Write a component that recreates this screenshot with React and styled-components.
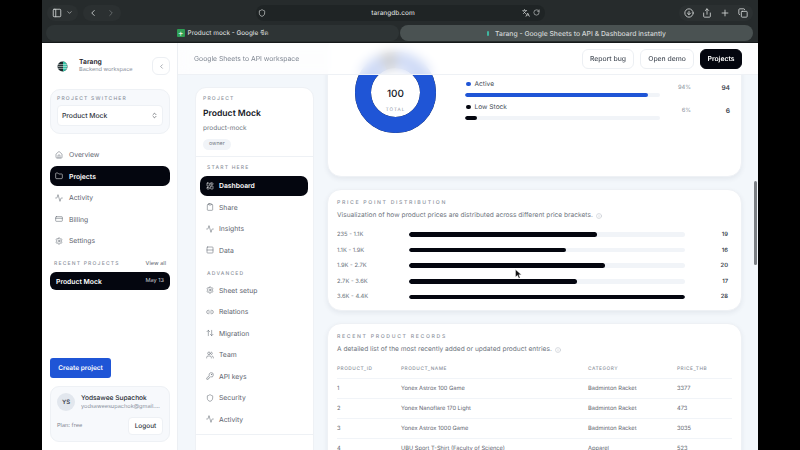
import styled, { createGlobalStyle } from "styled-components";
import {
  Activity,
  ArrowUpDown,
  ChevronDown,
  ChevronLeft,
  ChevronRight,
  ChevronsUpDown,
  CircleArrowDown,
  Clipboard,
  Copy,
  CreditCard,
  Folder,
  Home,
  Info,
  KeyRound,
  Languages,
  LayoutDashboard,
  Link2,
  PanelLeft,
  Plus,
  RotateCw,
  Rows2,
  Settings,
  Share,
  Shield,
  Users,
} from "lucide-react";

const GlobalStyle = createGlobalStyle`
  html, body {
    margin: 0;
    height: 100%;
    background: #000;
    overflow: hidden;
  }
  * { box-sizing: border-box; }
  body {
    font-family: Inter, "Liberation Sans", sans-serif;
    color: #1b2028;
    text-rendering: geometricPrecision;
  }
`;

const Frame = styled.div`
  width: 716px;
  height: 450px;
  margin-left: 42px;
  display: flex;
  flex-direction: column;
  position: relative;
  overflow: hidden;
  background: #fff;
`;

/* browser chrome */
const Chrome = styled.div`
  height: 43px;
  flex: none;
  background: #262b2c;
  display: flex;
  flex-direction: column;
  color: #d5d8d8;
  border-bottom: 1px solid #15191a;
`;
const ToolRow = styled.div`
  height: 25px;
  display: flex;
  align-items: center;
  padding: 0 0 0 5px;
`;
const ToolGroup = styled.div`
  display: flex;
  flex: none;
  align-items: center;
  gap: ${(p) => p.$gap || 6}px;
  height: 16px;
  margin-right: ${(p) => p.$mr || 0}px;
  margin-left: ${(p) => p.$ml || 0}px;
  padding: 0 5px;
  border-radius: 8px;
  background: #2b3031;
`;
const UrlBar = styled.div`
  width: 289px;
  flex: none;
  height: 16px;
  border-radius: 8px;
  background: #1f2425;
  display: flex;
  align-items: center;
  gap: 3px;
  padding: 0 5px 0 2px;
  font-size: 6.5px;
  font-weight: 500;
  color: #d8dbdb;
`;
const UrlText = styled.span`
  flex: 1;
  text-align: center;
  padding-right: 2px;
`;
const TabRow = styled.div`
  height: 17px;
  display: grid;
  grid-template-columns: repeat(2, minmax(0, 1fr));
  gap: 1px;
  padding: 0 5px 0 4px;
`;
const Tab = styled.div`
  height: 16px;
  border-radius: 8px;
  background: ${(p) => (p.$active ? "#4a5252" : "#2e3435")};
  display: flex;
  align-items: center;
  justify-content: center;
  gap: 3px;
  font-size: ${(p) => (p.$active ? 6.8 : 6.4)}px;
  font-weight: 500;
  color: #d3d6d6;
`;
const SheetIcon = styled.span`
  width: 8px;
  height: 8px;
  border-radius: 1px;
  background: #2f9e55;
  color: #e6f5ea;
  font-size: 8px;
  line-height: 8px;
  text-align: center;
`;
const TabDot = styled.span`
  width: 2px;
  height: 5px;
  border-radius: 1px;
  background: #3fb6a0;
  margin-right: 3px;
`;

/* app */
const Body = styled.div`
  flex: 1;
  min-height: 0;
  display: flex;
`;
const Sidebar = styled.aside`
  width: 136px;
  flex: none;
  background: #fff;
  border-right: 1px solid #eceff3;
  padding: 0 7px 8px 8px;
  display: flex;
  flex-direction: column;
`;
const Brand = styled.div`
  height: 46px;
  display: flex;
  align-items: center;
  padding-left: 7px;
`;
const BrandText = styled.div`
  margin-left: 11px;
  flex: 1;
`;
const BrandName = styled.div`
  font-size: 6.8px;
  font-weight: 600;
  line-height: 9px;
`;
const BrandSub = styled.div`
  font-size: 5.6px;
  color: #8a919c;
  line-height: 9px;
`;
const Collapse = styled.div`
  width: 18px;
  height: 18px;
  border-radius: 6px;
  border: 1px solid #eceff3;
  display: flex;
  align-items: center;
  justify-content: center;
  color: #6f7680;
`;
const Switcher = styled.div`
  height: 45px;
  border: 1px solid #eef1f5;
  border-radius: 10px;
  background: #f7f9fc;
  padding: 6px 6px 0;
  margin-bottom: 10.75px;
`;
const Eyebrow = styled.div`
  font-size: 5px;
  font-weight: 500;
  letter-spacing: 1.2px;
  color: #8c929c;
  text-transform: uppercase;
`;
const Select = styled.div`
  height: 21px;
  margin-top: 3px;
  background: #fff;
  border: 1px solid #eef1f5;
  border-radius: 4px;
  padding: 0 4px;
  display: flex;
  align-items: center;
  justify-content: space-between;
  font-size: 6.8px;
  font-weight: 500;
  color: #30353d;
`;
const NavItem = styled.div`
  height: 20px;
  margin-bottom: 1.5px;
  display: flex;
  align-items: center;
  gap: 6px;
  padding-left: 5px;
  border-radius: 7px;
  font-size: 6.8px;
  font-weight: ${(p) => (p.$active ? 600 : 400)};
  background: ${(p) => (p.$active ? "#04060f" : "transparent")};
  color: ${(p) => (p.$active ? "#fff" : "#5d646e")};
  svg {
    width: 8px;
    height: 8px;
    stroke-width: 1.6;
    flex: none;
  }
`;
const RecentHead = styled.div`
  display: flex;
  justify-content: space-between;
  align-items: center;
  margin-top: 9px;
  padding: 0 4px;
  color: #8c929c;
`;
const ViewAll = styled.span`
  font-size: 5.6px;
  color: #5d646e;
`;
const RecentItem = styled.div`
  height: 18px;
  margin-top: 5px;
  background: #04060f;
  border-radius: 6px;
  color: #fff;
  padding: 0 6px;
  display: flex;
  align-items: center;
  justify-content: space-between;
  font-size: 6.8px;
  font-weight: 600;
`;
const RecentDate = styled.span`
  font-size: 5.6px;
  font-weight: 400;
  color: #c9ccd2;
`;
const CreateBtn = styled.div`
  margin-top: auto;
  width: 61px;
  height: 20px;
  border-radius: 3px;
  background: #1f55d6;
  color: #fff;
  font-size: 6.5px;
  font-weight: 600;
  display: flex;
  align-items: center;
  justify-content: center;
`;
const UserCard = styled.div`
  margin-top: 8px;
  height: 56px;
  border: 1px solid #eef1f5;
  border-radius: 9px;
  background: #f7f9fc;
  padding: 6px;
  display: grid;
  grid-template-columns: 18px 1fr;
  column-gap: 6px;
  align-content: space-between;
`;
const Avatar = styled.div`
  width: 18px;
  height: 18px;
  border-radius: 50%;
  background: #e2e7ee;
  font-size: 6px;
  font-weight: 600;
  color: #3b424c;
  display: flex;
  align-items: center;
  justify-content: center;
`;
const UserText = styled.div`
  padding-top: 1px;
`;
const UserName = styled.div`
  font-size: 6.6px;
  font-weight: 500;
  line-height: 9px;
  color: #252a31;
`;
const UserMail = styled.div`
  font-size: 5.6px;
  color: #8a919c;
  line-height: 8px;
  white-space: nowrap;
  overflow: hidden;
  text-overflow: ellipsis;
  max-width: 81px;
`;
const UserFoot = styled.div`
  grid-column: 1 / -1;
  display: flex;
  justify-content: space-between;
  align-items: center;
  font-size: 5.6px;
  color: #7f8691;
`;
const LogoutBtn = styled.div`
  width: 35px;
  height: 18px;
  border: 1px solid #eef1f5;
  border-radius: 4px;
  background: #fff;
  color: #30353d;
  font-size: 6.5px;
  font-weight: 500;
  display: flex;
  align-items: center;
  justify-content: center;
`;

const Main = styled.main`
  flex: 1;
  min-width: 0;
  position: relative;
  overflow: hidden;
  background: #f3f7fb;
`;
const Header = styled.header`
  position: absolute;
  inset: 0 0 auto 0;
  height: 32px;
  z-index: 2;
  display: flex;
  align-items: center;
  justify-content: space-between;
  padding: 0 16px;
  background: rgba(255, 255, 255, 0.78);
  backdrop-filter: blur(6px);
  border-bottom: 1px solid #eef1f5;
  font-size: 6.8px;
  color: #7f8691;
`;
const HeaderActions = styled.div`
  display: flex;
  gap: 6px;
`;
const HeaderBtn = styled.div`
  width: ${(p) => p.$w}px;
  height: 20px;
  border-radius: 6px;
  border: 1px solid ${(p) => (p.$dark ? "#04060f" : "#eceff3")};
  background: ${(p) => (p.$dark ? "#04060f" : "#fff")};
  color: ${(p) => (p.$dark ? "#fff" : "#4b525c")};
  font-size: 6.8px;
  font-weight: ${(p) => (p.$dark ? 600 : 500)};
  display: flex;
  align-items: center;
  justify-content: center;
`;
const Content = styled.div`
  display: flex;
  gap: 13px;
  padding-left: 17px;
`;
const ProjectPanel = styled.section`
  width: 119px;
  flex: none;
  margin-top: 44px;
  background: #fff;
  border: 1px solid #eef1f5;
  border-radius: 11px 11px 0 0;
  height: 380px;
`;
const PanelHead = styled.div`
  height: 69px;
  padding: 8px 7px 0;
  border-bottom: 1px solid #eef1f5;
`;
const ProjectTitle = styled.div`
  font-size: 8.6px;
  font-weight: 600;
  color: #14181f;
  margin-top: 7px;
  line-height: 11px;
`;
const ProjectSlug = styled.div`
  font-size: 6.5px;
  color: #6f7680;
  margin-top: 4px;
  line-height: 9px;
`;
const Badge = styled.div`
  width: fit-content;
  margin-top: 6px;
  padding: 0 6px;
  height: 11px;
  line-height: 11px;
  border-radius: 6px;
  background: #f1f4f8;
  font-size: 5.3px;
  color: #6f7680;
`;
const PanelNav = styled.div`
  padding: 8px 5px 0 4px;
`;
const GroupLabel = styled.div`
  font-size: 5px;
  font-weight: 500;
  letter-spacing: 1.2px;
  color: #8c929c;
  padding-left: 7px;
  height: ${(p) => (p.$advanced ? 9 : 10.75)}px;
  margin-top: ${(p) => (p.$advanced ? 11 : 0)}px;
  text-transform: uppercase;
`;
const PanelItem = styled(NavItem)`
  padding-left: 6px;
  gap: 5px;
`;
const PanelRule = styled.div`
  border-top: 1px solid #eef1f5;
  margin-top: 5px;
`;
const Column = styled.div`
  width: 415px;
  flex: none;
  display: flex;
  flex-direction: column;
  gap: 12px;
`;
const Card = styled.section`
  background: #fff;
  border: 1px solid #eef1f5;
  border-radius: 14px;
  box-shadow: 0 2px 5px rgba(30, 45, 70, 0.07);
`;
const StatusCard = styled(Card)`
  margin-top: -8px;
  height: 142px;
  padding: 16px 12px 0 27px;
  display: flex;
  gap: 29px;
`;
const Donut = styled.div`
  width: 81px;
  height: 81px;
  flex: none;
  position: relative;
`;
const DonutLabel = styled.div`
  position: absolute;
  inset: 0;
  padding-top: 36px;
  display: flex;
  flex-direction: column;
  align-items: center;
`;
const DonutValue = styled.div`
  font-size: 10px;
  line-height: 12px;
  font-weight: 500;
  color: #14181f;
`;
const DonutCaption = styled.div`
  font-size: 4.6px;
  line-height: 6px;
  letter-spacing: 1px;
  color: #8c929c;
  margin-top: 8px;
`;
const Legend = styled.div`
  flex: 1;
  padding-top: 27.5px;
  display: grid;
  grid-template-columns: 195px 31px 39px;
  grid-auto-rows: 18px;
  row-gap: 5px;
  align-content: start;
  align-items: start;
`;
const LegendName = styled.div`
  display: flex;
  align-items: center;
  gap: 4px;
  font-size: 6.6px;
  color: #474e58;
  height: 9px;
`;
const LegendDot = styled.span`
  width: 4.5px;
  height: 4.5px;
  border-radius: 50%;
  margin-left: 1px;
  background: ${(p) => p.$color};
`;
const LegendBar = styled.div`
  height: 4px;
  margin-top: 4px;
  border-radius: 2px;
  background: #f1f4f8;
  overflow: hidden;
`;
const Fill = styled.div`
  height: 100%;
  border-radius: 3px;
  background: ${(p) => p.$color};
`;
const Pct = styled.div`
  font-size: 5.8px;
  line-height: 8px;
  padding-top: 4px;
  color: #8a919c;
  text-align: right;
`;
const Num = styled.div`
  font-size: 6.6px;
  line-height: 8px;
  padding-top: 4px;
  font-weight: 600;
  color: #3b424c;
  text-align: right;
`;
const SectionCard = styled(Card)`
  padding: 9px 9px 0;
  height: ${(p) => p.$h}px;
`;
const SectionLabel = styled.div`
  font-size: 5.2px;
  font-weight: 500;
  letter-spacing: 1.65px;
  color: #8c929c;
  line-height: 8px;
`;
const SectionNote = styled.div`
  margin-top: 4px;
  font-size: 6.6px;
  line-height: 9px;
  color: #6f7680;
  display: flex;
  align-items: center;
  gap: 3px;
  svg {
    width: 6px;
    height: 6px;
    color: #b9bec6;
  }
`;
const PriceRows = styled.div`
  margin-top: 11px;
  display: grid;
  row-gap: 9.6px;
`;
const PriceRow = styled.div`
  display: grid;
  grid-template-columns: 72px 276px 1fr;
  align-items: center;
  height: 6px;
  font-size: 5.8px;
  color: #6a717b;
`;
const PriceBar = styled.div`
  height: 4.5px;
  border-radius: 3px;
  background: #f1f4f8;
  overflow: hidden;
`;
const PriceCount = styled.div`
  text-align: right;
  font-weight: 600;
  color: #3b424c;
  padding-right: 4px;
`;
const TableEl = styled.table`
  width: 100%;
  margin-top: 7px;
  border-collapse: collapse;
  table-layout: fixed;
`;
const Th = styled.th`
  width: ${(p) => p.$w}px;
  text-align: left;
  font-size: 4.8px;
  font-weight: 500;
  letter-spacing: 0.5px;
  color: #8c929c;
  height: 17px;
  padding: 0;
  border-bottom: 1px solid #f1f4f8;
`;
const Td = styled.td`
  font-size: 5.7px;
  color: #5d646e;
  height: 20px;
  padding: 0;
  border-bottom: 1px solid #f1f4f8;
`;
const Scrollbar = styled.div`
  position: absolute;
  right: 1.5px;
  top: 138px;
  width: 3px;
  height: 84px;
  border-radius: 2px;
  background: #7b7f84;
`;
const Cursor = styled.svg`
  position: absolute;
  left: 473px;
  top: 269px;
  width: 7px;
  height: 10px;
  z-index: 3;
`;

const sideNav = [
  ["Overview", Home],
  ["Projects", Folder, true],
  ["Activity", Activity],
  ["Billing", CreditCard],
  ["Settings", Settings],
];
const startNav = [
  ["Dashboard", LayoutDashboard, true],
  ["Share", Clipboard],
  ["Insights", Activity],
  ["Data", Rows2],
];
const advancedNav = [
  ["Sheet setup", Settings],
  ["Relations", Link2],
  ["Migration", ArrowUpDown],
  ["Team", Users],
  ["API keys", KeyRound],
  ["Security", Shield],
  ["Activity", Activity],
];
const prices = [
  ["235 - 1.1K", 19, 68],
  ["1.1K - 1.9K", 16, 57],
  ["1.9K - 2.7K", 20, 71],
  ["2.7K - 3.6K", 17, 61],
  ["3.6K - 4.4K", 28, 100],
];
const records = [
  [1, "Yonex Astrox 100 Game", "Badminton Racket", 3377],
  [2, "Yonex Nanoflare 170 Light", "Badminton Racket", 473],
  [3, "Yonex Astrox 1000 Game", "Badminton Racket", 3035],
  [4, "UBU Sport T-Shirt (Faculty of Science)", "Apparel", 523],
];

function Logo() {
  return (
    <svg width="11" height="11" viewBox="0 0 11 11">
      <circle cx="5.5" cy="5.5" r="5" fill="#1c2a2c" />
      <path d="M6 .6a5 5 0 0 1 0 9.8z" fill="#35c3a6" />
      <path d="M.5 3.6h10M.5 5.5h10M.5 7.4h10" stroke="#fff" strokeWidth=".5" />
    </svg>
  );
}

function StatusDonut() {
  const r = 32.5;
  const c = 2 * Math.PI * r;
  return (
    <Donut>
      <svg width="81" height="81" viewBox="0 0 81 81">
        <circle cx="40.5" cy="40.5" r={r} fill="none" stroke="#111" strokeWidth="16" />
        <circle
          cx="40.5"
          cy="40.5"
          r={r}
          fill="none"
          stroke="#1f55d6"
          strokeWidth="16"
          strokeDasharray={`${c * 0.94} ${c}`}
          transform="rotate(-90 40.5 40.5)"
        />
      </svg>
      <DonutLabel>
        <DonutValue>100</DonutValue>
        <DonutCaption>TOTAL</DonutCaption>
      </DonutLabel>
    </Donut>
  );
}

export default function App() {
  return (
    <>
      <GlobalStyle />
      <Frame>
        <Chrome>
          <ToolRow>
            <ToolGroup $mr={5} $gap={4}>
              <PanelLeft size={10} />
              <ChevronDown size={7} />
            </ToolGroup>
            <ToolGroup $gap={8} $mr={135}>
              <ChevronLeft size={10} />
              <ChevronRight size={10} color="#6d7273" />
            </ToolGroup>
            <UrlBar>
              <Shield size={8} />
              <UrlText>tarangdb.com</UrlText>
              <Languages size={8} />
              <RotateCw size={7} />
            </UrlBar>
            <ToolGroup $ml={134} $gap={8}>
              <CircleArrowDown size={10} />
              <Share size={10} />
              <Plus size={10} />
              <Copy size={10} />
            </ToolGroup>
          </ToolRow>
          <TabRow>
            <Tab>
              <SheetIcon>+</SheetIcon>
              Product mock - Google ชีต
            </Tab>
            <Tab $active>
              <TabDot />
              Tarang - Google Sheets to API &amp; Dashboard instantly
            </Tab>
          </TabRow>
        </Chrome>
        <Body>
          <Sidebar>
            <Brand>
              <Logo />
              <BrandText>
                <BrandName>Tarang</BrandName>
                <BrandSub>Backend workspace</BrandSub>
              </BrandText>
              <Collapse>
                <ChevronLeft size={7} />
              </Collapse>
            </Brand>
            <Switcher>
              <Eyebrow>Project switcher</Eyebrow>
              <Select>
                Product Mock
                <ChevronsUpDown size={7} />
              </Select>
            </Switcher>
            {sideNav.map(([label, Icon, active]) => (
              <NavItem key={label} $active={active}>
                <Icon />
                {label}
              </NavItem>
            ))}
            <RecentHead>
              <Eyebrow>Recent projects</Eyebrow>
              <ViewAll>View all</ViewAll>
            </RecentHead>
            <RecentItem>
              Product Mock
              <RecentDate>May 13</RecentDate>
            </RecentItem>
            <CreateBtn>Create project</CreateBtn>
            <UserCard>
              <Avatar>YS</Avatar>
              <UserText>
                <UserName>Yodsawee Supachok</UserName>
                <UserMail>yodsaweesupachok@gmail.com</UserMail>
              </UserText>
              <UserFoot>
                Plan: free
                <LogoutBtn>Logout</LogoutBtn>
              </UserFoot>
            </UserCard>
          </Sidebar>
          <Main>
            <Header>
              Google Sheets to API workspace
              <HeaderActions>
                <HeaderBtn $w={52}>Report bug</HeaderBtn>
                <HeaderBtn $w={54}>Open demo</HeaderBtn>
                <HeaderBtn $w={42} $dark>
                  Projects
                </HeaderBtn>
              </HeaderActions>
            </Header>
            <Content>
              <ProjectPanel>
                <PanelHead>
                  <Eyebrow>Project</Eyebrow>
                  <ProjectTitle>Product Mock</ProjectTitle>
                  <ProjectSlug>product-mock</ProjectSlug>
                  <Badge>owner</Badge>
                </PanelHead>
                <PanelNav>
                  <GroupLabel>Start here</GroupLabel>
                  {startNav.map(([label, Icon, active]) => (
                    <PanelItem key={label} $active={active}>
                      <Icon />
                      {label}
                    </PanelItem>
                  ))}
                  <GroupLabel $advanced>Advanced</GroupLabel>
                  {advancedNav.map(([label, Icon]) => (
                    <PanelItem key={label}>
                      <Icon />
                      {label}
                    </PanelItem>
                  ))}
                </PanelNav>
                <PanelRule />
              </ProjectPanel>
              <Column>
                <StatusCard>
                  <StatusDonut />
                  <Legend>
                    <div>
                      <LegendName>
                        <LegendDot $color="#1f55d6" />
                        Active
                      </LegendName>
                      <LegendBar>
                        <Fill $color="#1f55d6" style={{ width: "94%" }} />
                      </LegendBar>
                    </div>
                    <Pct>94%</Pct>
                    <Num>94</Num>
                    <div>
                      <LegendName>
                        <LegendDot $color="#04060f" />
                        Low Stock
                      </LegendName>
                      <LegendBar>
                        <Fill $color="#04060f" style={{ width: "6%" }} />
                      </LegendBar>
                    </div>
                    <Pct>6%</Pct>
                    <Num>6</Num>
                  </Legend>
                </StatusCard>
                <SectionCard $h={122}>
                  <SectionLabel>PRICE POINT DISTRIBUTION</SectionLabel>
                  <SectionNote>
                    Visualization of how product prices are distributed across different price brackets.
                    <Info />
                  </SectionNote>
                  <PriceRows>
                    {prices.map(([label, count, pct]) => (
                      <PriceRow key={label}>
                        {label}
                        <PriceBar>
                          <Fill $color="#04060f" style={{ width: `${pct}%` }} />
                        </PriceBar>
                        <PriceCount>{count}</PriceCount>
                      </PriceRow>
                    ))}
                  </PriceRows>
                </SectionCard>
                <SectionCard $h={150}>
                  <SectionLabel>RECENT PRODUCT RECORDS</SectionLabel>
                  <SectionNote>
                    A detailed list of the most recently added or updated product entries.
                    <Info />
                  </SectionNote>
                  <TableEl>
                    <thead>
                      <tr>
                        <Th $w={64}>PRODUCT_ID</Th>
                        <Th $w={187}>PRODUCT_NAME</Th>
                        <Th $w={89}>CATEGORY</Th>
                        <Th>PRICE_THB</Th>
                      </tr>
                    </thead>
                    <tbody>
                      {records.map(([id, name, category, price]) => (
                        <tr key={id}>
                          <Td>{id}</Td>
                          <Td>{name}</Td>
                          <Td>{category}</Td>
                          <Td>{price}</Td>
                        </tr>
                      ))}
                    </tbody>
                  </TableEl>
                </SectionCard>
              </Column>
            </Content>
            <Scrollbar />
          </Main>
        </Body>
        <Cursor viewBox="0 0 7 10">
          <path d="M.5.5v7.6l2-1.8 1.3 3 1.3-.6-1.3-2.9h2.6z" fill="#111" stroke="#fff" strokeWidth=".4" />
        </Cursor>
      </Frame>
    </>
  );
}
